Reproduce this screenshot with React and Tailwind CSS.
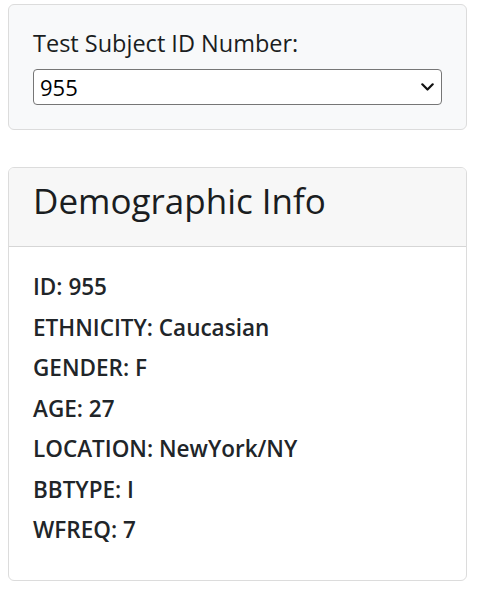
import React, { useState } from 'react';

const SUBJECT = {
  id: 955,
  ethnicity: 'Caucasian',
  gender: 'F',
  age: 27,
  location: 'NewYork/NY',
  bbtype: 'I',
  wfreq: 7,
};

export default function App() {
  const [id, setId] = useState('955');

  const rows = [
    ['ID', SUBJECT.id],
    ['ETHNICITY', SUBJECT.ethnicity],
    ['GENDER', SUBJECT.gender],
    ['AGE', SUBJECT.age],
    ['LOCATION', SUBJECT.location],
    ['BBTYPE', SUBJECT.bbtype],
    ['WFREQ', SUBJECT.wfreq],
  ];

  return (
    <div className="min-h-screen bg-white pl-[8px] pr-[10px] pt-[4px] text-[#212529]" style={{ fontFamily: '"Open Sans", "Noto Sans", sans-serif' }}>
      {/* well */}
      <div className="rounded-[6px] border border-[#dcdcdc] bg-[#f8f9fa] px-[24px] pt-[23px] pb-[24px]">
        <label className="mb-[11px] block text-[23.5px] leading-[30px] font-medium text-[#1a1d21]">Test Subject ID Number:</label>
        <div className="relative">
          <select
            value={id}
            onChange={e => setId(e.target.value)}
            className="block h-[36px] w-full appearance-none rounded-[4px] border border-[#767676] bg-white pl-[6px] text-[22px] text-black outline-none"
          >
            <option value="955">955</option>
            <option value="940">940</option>
            <option value="941">941</option>
          </select>
          <svg className="pointer-events-none absolute right-[8px] top-[14px]" width="13" height="8" viewBox="0 0 13 8">
            <path d="M1.3 1.3 L6.5 6.5 L11.7 1.3" fill="none" stroke="#111" strokeWidth="2.2" strokeLinecap="round" strokeLinejoin="round" />
          </svg>
        </div>
      </div>

      {/* demographic card */}
      <div className="mt-[37px] overflow-hidden rounded-[6px] border border-[#dcdcdc] bg-white">
        <div className="border-b border-[#d6d6d6] bg-[#f7f7f7] px-[24px] pt-[13px] pb-[25px]">
          <h2 className="text-[35px] leading-[40px] font-medium text-[#1a1d21]">Demographic Info</h2>
        </div>
        <div className="px-[24px] pt-[25px] pb-[24px]">
          {rows.map(([k, v]) => (
            <h5 key={k} className="mb-[10px] text-[22.5px] leading-[30.5px] font-semibold">
              {k}: {v}
            </h5>
          ))}
        </div>
      </div>
    </div>
  );
}
